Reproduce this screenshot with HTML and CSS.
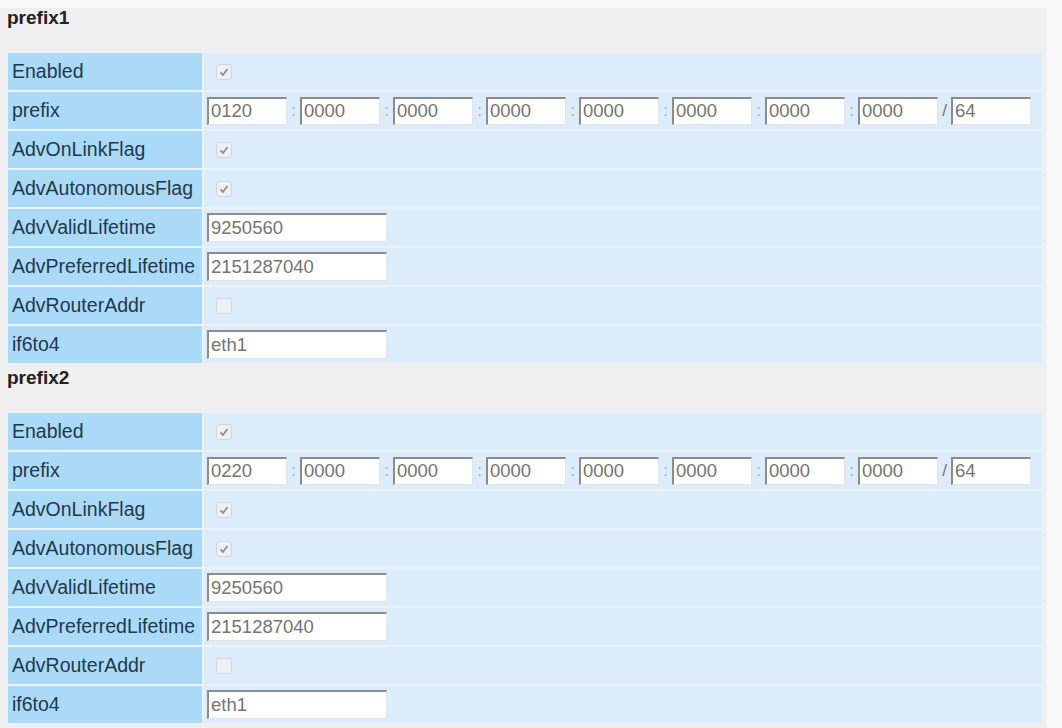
FILE: index.html
```html
<html>
  <head>
    <link rel="stylesheet" href="styles.css">
  </head>
  <body>
    <div class="panel">

      <!-- first prefix block -->
      <div class="prefixTitle">prefix1</div>
      <div class="fields">
        <div class="label">Enabled</div>
        <div class="value"><span class="check on"><svg viewBox="0 0 14 14"><path d="M3.5 7.5 L6 10 L10.5 4" /></svg></span></div>

        <div class="label">prefix</div>
        <div class="value">
          <input class="seg" value="0120" disabled><span class="sep">:</span>
          <input class="seg" value="0000" disabled><span class="sep">:</span>
          <input class="seg" value="0000" disabled><span class="sep">:</span>
          <input class="seg" value="0000" disabled><span class="sep">:</span>
          <input class="seg" value="0000" disabled><span class="sep">:</span>
          <input class="seg" value="0000" disabled><span class="sep">:</span>
          <input class="seg" value="0000" disabled><span class="sep">:</span>
          <input class="seg" value="0000" disabled><span class="sep slash">/</span>
          <input class="seg" value="64" disabled>
        </div>

        <div class="label">AdvOnLinkFlag</div>
        <div class="value"><span class="check on"><svg viewBox="0 0 14 14"><path d="M3.5 7.5 L6 10 L10.5 4" /></svg></span></div>

        <div class="label">AdvAutonomousFlag</div>
        <div class="value"><span class="check on"><svg viewBox="0 0 14 14"><path d="M3.5 7.5 L6 10 L10.5 4" /></svg></span></div>

        <div class="label">AdvValidLifetime</div>
        <div class="value"><input class="wide" value="9250560" disabled></div>

        <div class="label">AdvPreferredLifetime</div>
        <div class="value"><input class="wide" value="2151287040" disabled></div>

        <div class="label">AdvRouterAddr</div>
        <div class="value"><span class="check"></span></div>

        <div class="label">if6to4</div>
        <div class="value"><input class="wide" value="eth1" disabled></div>
      </div>

      <!-- second prefix block -->
      <div class="prefixTitle">prefix2</div>
      <div class="fields">
        <div class="label">Enabled</div>
        <div class="value"><span class="check on"><svg viewBox="0 0 14 14"><path d="M3.5 7.5 L6 10 L10.5 4" /></svg></span></div>

        <div class="label">prefix</div>
        <div class="value">
          <input class="seg" value="0220" disabled><span class="sep">:</span>
          <input class="seg" value="0000" disabled><span class="sep">:</span>
          <input class="seg" value="0000" disabled><span class="sep">:</span>
          <input class="seg" value="0000" disabled><span class="sep">:</span>
          <input class="seg" value="0000" disabled><span class="sep">:</span>
          <input class="seg" value="0000" disabled><span class="sep">:</span>
          <input class="seg" value="0000" disabled><span class="sep">:</span>
          <input class="seg" value="0000" disabled><span class="sep slash">/</span>
          <input class="seg" value="64" disabled>
        </div>

        <div class="label">AdvOnLinkFlag</div>
        <div class="value"><span class="check on"><svg viewBox="0 0 14 14"><path d="M3.5 7.5 L6 10 L10.5 4" /></svg></span></div>

        <div class="label">AdvAutonomousFlag</div>
        <div class="value"><span class="check on"><svg viewBox="0 0 14 14"><path d="M3.5 7.5 L6 10 L10.5 4" /></svg></span></div>

        <div class="label">AdvValidLifetime</div>
        <div class="value"><input class="wide" value="9250560" disabled></div>

        <div class="label">AdvPreferredLifetime</div>
        <div class="value"><input class="wide" value="2151287040" disabled></div>

        <div class="label">AdvRouterAddr</div>
        <div class="value"><span class="check"></span></div>

        <div class="label">if6to4</div>
        <div class="value"><input class="wide" value="eth1" disabled></div>
      </div>

    </div>
  </body>
</html>
```

FILE: styles.css
```css
body {
  margin: 0;
  background-color: #fafafa;
  font-family: "Liberation Sans", Arial, sans-serif;
}

.panel {
  margin-top: 8px;
  width: 1047px;
  padding-bottom: 10px;
  background-color: #efefef; /* light gray page area */
}

.prefixTitle {
  padding-left: 7px;
  font-size: 19px;
  font-weight: bold;
  line-height: 20px;
  color: #222;
  margin-bottom: 25px;
}

.fields {
  display: grid;
  grid-template-columns: 194px 1fr;
  grid-auto-rows: 37px;
  gap: 2px 2px;
  width: 1034px;
  margin-left: 8px;
  margin-bottom: 5px;
  background-color: #e8f3fc; /* shows through as the cell spacing */
}

.label {
  display: flex;
  align-items: center;
  padding-left: 4px;
  font-size: 19.5px;
  color: #1f394c;
  background-color: #abdaf9; /* bright blue label column */
}

.value {
  display: flex;
  align-items: center;
  padding-left: 3px;
  background-color: #dcecfa;
}

input {
  font-family: "Liberation Sans", Arial, sans-serif;
  font-size: 18.5px;
  color: #747474;
  background: #fff;
  height: 28px;
  padding: 0 0 0 2px;
  margin: 0;
  border-style: solid;
  border-width: 2px 1px 1px 2px;
  border-color: #8c8c8c #e4e4e4 #e4e4e4 #8c8c8c;
  box-sizing: border-box;
}

.seg {
  width: 80px;
}

.wide {
  width: 180px;
  height: 29px;
}

.sep {
  width: 13px;
  text-align: center;
  font-size: 17px;
  color: #a8a8a8;
}

.slash {
  color: #777;
}

.check {
  display: inline-block;
  width: 14px;
  height: 14px;
  margin-left: 9px;
  border: 1px solid #d2d6da;
  border-radius: 3px;
  background-color: #eef1f4;
}

.check svg {
  display: block;
  width: 14px;
  height: 14px;
}

.check path {
  fill: none;
  stroke: #8a8f94;
  stroke-width: 1.8;
}
```
